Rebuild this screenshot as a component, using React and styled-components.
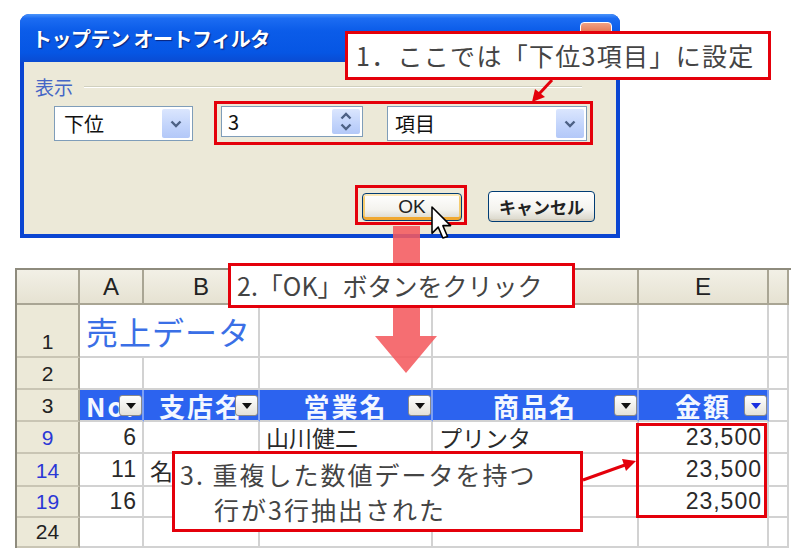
import React from "react";
import styled, { createGlobalStyle } from "styled-components";

const GlobalStyle = createGlobalStyle`
  html, body {
    margin: 0;
    padding: 0;
    background: #fff;
  }
  body {
    font-family: "Noto Sans CJK JP", "Liberation Sans", sans-serif;
  }
`;

const Page = styled.div`
  position: relative;
  width: 800px;
  height: 560px;
  overflow: hidden;
  background: #fff;
  display: flex;
  flex-direction: column;
`;

/* ---------- dialog ---------- */

const Dialog = styled.div`
  margin: 14px 0 0 20px;
  width: 600px;
  height: 224px;
  box-sizing: border-box;
  display: flex;
  flex-direction: column;
  background: #0a45d2;
  border-radius: 9px 9px 0 0;
  padding: 0 4px 4px;
`;

const TitleBar = styled.div`
  height: 48px;
  margin: 0 -4px;
  padding: 0 8px 0 12px;
  display: flex;
  align-items: center;
  justify-content: space-between;
  border-radius: 9px 9px 0 0;
  background: linear-gradient(
    180deg,
    #4a94fb 0%,
    #1c6cf2 9%,
    #0b5ce9 35%,
    #0656e4 80%,
    #0a4bd2 100%
  );
  color: #fff;
  font-size: 20px;
  font-weight: bold;
  letter-spacing: -0.5px;
  text-shadow: 1px 1px 1px #0a2278;
`;

const CloseBtn = styled.div`
  width: 32px;
  height: 32px;
  box-sizing: border-box;
  border: 1px solid #fff;
  border-radius: 4px;
  background: linear-gradient(#f0a285, #e0603a 45%, #c8401c);
  display: flex;
  align-items: center;
  justify-content: center;
`;

const DialogBody = styled.div`
  flex: 1;
  background: #ece9d8;
  display: flex;
  flex-direction: column;
  padding-top: 15px;
`;

const GroupHead = styled.div`
  display: flex;
  align-items: center;
  padding: 0 34px 0 11px;
  height: 20px;
`;

const GroupLabel = styled.span`
  font-size: 19px;
  line-height: 20px;
  color: #4566c6;
`;

const GroupLine = styled.div`
  flex: 1;
  margin-left: 11px;
  border-top: 1px solid #d0d0bf;
  border-bottom: 1px solid #fff;
`;

const ControlRow = styled.div`
  display: flex;
  align-items: flex-start;
  margin-top: 9px;
  padding-left: 30px;
`;

const Field = styled.div`
  width: ${(p) => p.$w}px;
  height: ${(p) => p.$h}px;
  margin-left: ${(p) => p.$ml || 0}px;
  box-sizing: border-box;
  border: 1px solid #7f9db9;
  background: #fff;
  display: flex;
  align-items: stretch;
  padding: 2px;
`;

const FieldText = styled.span`
  flex: 1;
  display: flex;
  align-items: center;
  padding-left: ${(p) => p.$pl || 7}px;
  font-size: 20px;
  color: #111;
`;

const DropBtn = styled.div`
  width: 28px;
  border-radius: 2px;
  background: linear-gradient(#dbe6fe, #c1d3fb 60%, #b3c8f8);
  display: flex;
  flex-direction: column;
  align-items: center;
  justify-content: center;
  gap: 3px;
`;

const ButtonRow = styled.div`
  display: flex;
  justify-content: flex-end;
  align-items: center;
  gap: 26px;
  margin-top: 50px;
  padding-right: 21px;
`;

const XpButton = styled.div`
  width: ${(p) => p.$w}px;
  height: ${(p) => p.$h}px;
  box-sizing: border-box;
  border: 1px solid #003c74;
  border-radius: 4px;
  background: linear-gradient(#ffffff, #f4f3ee 60%, #d8d5c8);
  box-shadow: ${(p) =>
    p.$focus
      ? "inset 0 -3px 0 #f0a830, inset 0 2px 0 #fce9b8, inset 2px 0 0 #f5cc70, inset -2px 0 0 #f5cc70"
      : "inset 0 -2px 0 #d6d0c0"};
  display: flex;
  align-items: center;
  justify-content: center;
  font-size: ${(p) => (p.$latin ? 19 : 17)}px;
  font-weight: ${(p) => (p.$bold ? "bold" : "normal")};
  color: #222;
  font-family: ${(p) =>
    p.$latin
      ? '"Liberation Sans", sans-serif'
      : '"Noto Sans CJK JP", sans-serif'};
`;

/* ---------- sheet ---------- */

const Sheet = styled.div`
  margin: 30px 0 0 15px;
  width: 774px;
  display: grid;
  grid-template-columns: 63px 64px 116px 173px 206px 130px 20px;
  grid-template-rows: 35px 53px 32px 32px 32px 33px 31px 30px;
  border-top: 2px solid #8e8b7d;
  border-left: 2px solid #8e8b7d;
`;

const ColHead = styled.div`
  background: linear-gradient(#f2f0e6, #e6e2d2);
  border-right: 2px solid #a9a594;
  border-bottom: 2px solid #a9a594;
  display: flex;
  align-items: center;
  justify-content: center;
  font-family: "Liberation Sans", sans-serif;
  font-size: 24px;
  color: #222;
`;

const RowHead = styled.div`
  background: #ece9d8;
  border-right: 2px solid #a9a594;
  border-bottom: 2px solid #c9c5b4;
  display: flex;
  align-items: flex-end;
  justify-content: center;
  padding-bottom: 1px;
  font-family: "Liberation Sans", sans-serif;
  font-size: 21px;
  line-height: 26px;
  color: ${(p) => (p.$hit ? "#2b37d6" : "#222")};
`;

const Cell = styled.div`
  border-right: 2px solid #d2d2d2;
  border-bottom: 2px solid #d2d2d2;
  display: flex;
  align-items: center;
  justify-content: ${(p) => (p.$num ? "flex-end" : "flex-start")};
  padding: 0 ${(p) => (p.$num ? 5 : 6)}px 0 ${(p) => (p.$num ? 0 : 6)}px;
  overflow: hidden;
  white-space: nowrap;
  font-family: ${(p) =>
    p.$num
      ? '"Liberation Sans", sans-serif'
      : '"Noto Sans CJK JP", sans-serif'};
  font-size: 23px;
  letter-spacing: ${(p) => (p.$num ? 1 : 0)}px;
  color: #2a2a2a;
`;

const TitleCell = styled(Cell)`
  grid-column: span 2;
  align-items: flex-end;
  padding-bottom: 2px;
  font-size: 32px;
  letter-spacing: 1px;
  color: #3a6fe6;
`;

const HeadCell = styled.div`
  position: relative;
  background: #2c63ef;
  border-right: 2px solid #7ea0f4;
  border-bottom: 2px solid #d2d2d2;
  display: flex;
  align-items: center;
  justify-content: center;
  overflow: hidden;
  white-space: nowrap;
  font-size: 26px;
  letter-spacing: 2px;
  font-weight: bold;
  color: #f4f8ff;
`;

const FilterBtn = styled.span`
  position: absolute;
  right: 0;
  top: 5px;
  width: 23px;
  height: 21px;
  box-sizing: border-box;
  border: 1px solid #8a8a8a;
  border-radius: 3px;
  background: linear-gradient(#ffffff, #e4e2da);
  display: flex;
  align-items: center;
  justify-content: center;
`;

const FilterTri = styled.span`
  width: 0;
  height: 0;
  border-left: 5px solid transparent;
  border-right: 5px solid transparent;
  border-top: 6px solid ${(p) => (p.$active ? "#1a2ee0" : "#111")};
`;

/* ---------- annotations ---------- */

const Callout = styled.div`
  position: absolute;
  left: ${(p) => p.$x}px;
  top: ${(p) => p.$y}px;
  width: ${(p) => p.$w}px;
  height: ${(p) => p.$h}px;
  box-sizing: border-box;
  border: 3px solid #e4000b;
  background: #fff;
  display: flex;
  flex-direction: column;
  justify-content: center;
  padding-left: ${(p) => p.$pl}px;
  font-size: 25px;
  line-height: 35px;
  letter-spacing: ${(p) => p.$ls || 0}px;
  color: #444;
  white-space: nowrap;
  z-index: 3;
`;

const Indent = styled.span`
  padding-left: ${(p) => p.$pl}px;
`;

const Highlight = styled.div`
  position: absolute;
  left: ${(p) => p.$x}px;
  top: ${(p) => p.$y}px;
  width: ${(p) => p.$w}px;
  height: ${(p) => p.$h}px;
  box-sizing: border-box;
  border: 3px solid #e4000b;
  z-index: 2;
`;

const Drawing = styled.svg`
  position: absolute;
  left: 0;
  top: 0;
  width: 800px;
  height: 560px;
  pointer-events: none;
  z-index: ${(p) => p.$z};
`;

const Chevron = ({ up }) => (
  <svg width="12" height="8" viewBox="0 0 12 8">
    <polyline
      points={up ? "1.5,6.5 6,2 10.5,6.5" : "1.5,1.5 6,6 10.5,1.5"}
      fill="none"
      stroke="#4d6185"
      strokeWidth="2.4"
    />
  </svg>
);

// C and D headers sit under callout 2 in the picture
const cols = ["A", "B", "", "", "E", ""];

const heads = [
  { t: "No.", active: false },
  { t: "支店名", active: false },
  { t: "営業名", active: false },
  { t: "商品名", active: false },
  { t: "金額", active: true },
];

const rows = [
  { n: "9", hit: true, a: "6", b: "", c: "山川健二", d: "プリンタ", e: "23,500" },
  { n: "14", hit: true, a: "11", b: "名古屋", c: "", d: "", e: "23,500" },
  { n: "19", hit: true, a: "16", b: "", c: "", d: "", e: "23,500" },
  { n: "24", hit: false, a: "", b: "", c: "", d: "", e: "" },
];

export default function App() {
  return (
    <Page>
      <GlobalStyle />

      <Dialog>
        <TitleBar>
          <span>トップテン オートフィルタ</span>
          <CloseBtn>
            <svg width="14" height="14" viewBox="0 0 14 14">
              <path d="M2 2 L12 12 M12 2 L2 12" stroke="#fff" strokeWidth="3" />
            </svg>
          </CloseBtn>
        </TitleBar>
        <DialogBody>
          <GroupHead>
            <GroupLabel>表示</GroupLabel>
            <GroupLine />
          </GroupHead>
          <ControlRow>
            <Field $w={139} $h={35}>
              <FieldText>下位</FieldText>
              <DropBtn>
                <Chevron />
              </DropBtn>
            </Field>
            <Field $w={142} $h={31} $ml={28}>
              <FieldText $pl={4}>3</FieldText>
              <DropBtn>
                <Chevron up />
                <Chevron />
              </DropBtn>
            </Field>
            <Field $w={200} $h={35} $ml={24}>
              <FieldText $pl={5}>項目</FieldText>
              <DropBtn>
                <Chevron />
              </DropBtn>
            </Field>
          </ControlRow>
          <ButtonRow>
            <XpButton $w={100} $h={28} $focus $latin>
              OK
            </XpButton>
            <XpButton $w={107} $h={31} $bold>
              キャンセル
            </XpButton>
          </ButtonRow>
        </DialogBody>
      </Dialog>

      <Sheet>
        <ColHead />
        {cols.map((c, i) => (
          <ColHead key={i}>{c}</ColHead>
        ))}

        <RowHead>1</RowHead>
        <TitleCell>売上データ</TitleCell>
        <Cell />
        <Cell />
        <Cell />
        <Cell />

        <RowHead>2</RowHead>
        {cols.map((c, i) => (
          <Cell key={i} />
        ))}

        <RowHead>3</RowHead>
        {heads.map((h) => (
          <HeadCell key={h.t}>
            {h.t}
            <FilterBtn>
              <FilterTri $active={h.active} />
            </FilterBtn>
          </HeadCell>
        ))}
        <Cell />

        {rows.map((r) => (
          <React.Fragment key={r.n}>
            <RowHead $hit={r.hit}>{r.n}</RowHead>
            <Cell $num>{r.a}</Cell>
            <Cell>{r.b}</Cell>
            <Cell>{r.c}</Cell>
            <Cell>{r.d}</Cell>
            <Cell $num>{r.e}</Cell>
            <Cell />
          </React.Fragment>
        ))}
      </Sheet>

      {/* big pink arrow from OK button down to the sheet */}
      <Drawing $z={1} viewBox="0 0 800 560">
        <polygon
          points="393,226 420,226 420,336 437,336 406,373 375,336 393,336"
          fill="#f45a5e"
          fillOpacity="0.88"
        />
      </Drawing>

      <Highlight $x={214} $y={101} $w={379} $h={44} />
      <Highlight $x={355} $y={185} $w={112} $h={40} />
      <Highlight $x={636} $y={423} $w={131} $h={95} />

      <Callout $x={345} $y={31} $w={426} $h={49} $pl={8} $ls={1.3}>
        1．ここでは「下位3項目」に設定
      </Callout>
      <Callout $x={228} $y={263} $w={347} $h={45} $pl={6}>
        2.「OK」ボタンをクリック
      </Callout>
      <Callout $x={172} $y={451} $w={411} $h={81} $pl={5} $ls={2}>
        <span>3. 重複した数値データを持つ</span>
        <Indent $pl={34}>行が3行抽出された</Indent>
      </Callout>

      {/* red pointer arrows and the mouse cursor */}
      <Drawing $z={4} viewBox="0 0 800 560">
        <line x1="552" y1="80" x2="539" y2="94" stroke="#e4000b" strokeWidth="3" />
        <polygon points="532,102 535,89 545,97" fill="#e4000b" />
        <line x1="583" y1="480" x2="625" y2="465" stroke="#e4000b" strokeWidth="3" />
        <polygon points="636,461 622,459 626,471" fill="#e4000b" />
        <g transform="translate(432 207) scale(1.55)">
          <path
            d="M0 0 L0 17 L4 13 L7 20 L10 19 L7 12 L12 12 Z"
            fill="#fff"
            stroke="#000"
            strokeWidth="1"
            strokeLinejoin="round"
          />
        </g>
      </Drawing>
    </Page>
  );
}
